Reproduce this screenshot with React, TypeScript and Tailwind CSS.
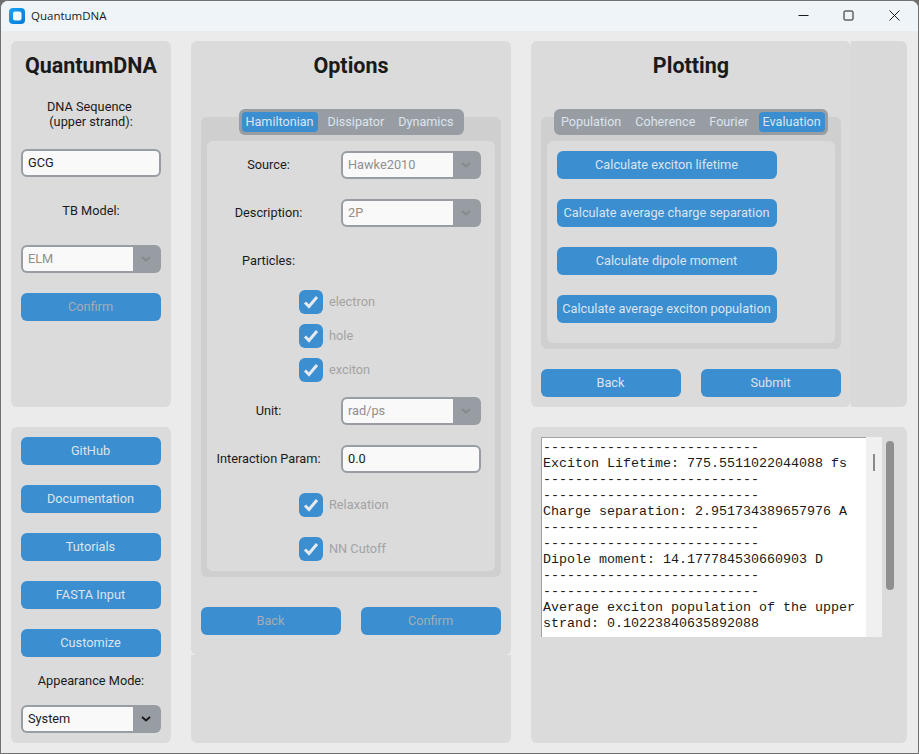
import React from "react";

const Chevron = ({ dark }: { dark?: boolean }) => (
  <svg width="10" height="6" viewBox="0 0 10 6" fill="none">
    <path d="M1 1 L5 4.5 L9 1" stroke={dark ? "#1a1a1a" : "#858a8e"} strokeWidth="2" />
  </svg>
);

const Btn = ({ children, disabled, w = "w-[140px]" }: { children: React.ReactNode; disabled?: boolean; w?: string }) => (
  <div className={`${w} h-[28px] shrink-0 rounded-[6px] bg-[#3b8ed0] flex items-center justify-center pr-[1px] text-[12.75px] ${disabled ? "text-[#a6adb3]" : "text-[#dce4ee]"}`}>
    {children}
  </div>
);

const Combo = ({ value, dark }: { value: string; dark?: boolean }) => (
  <div className="w-[140px] h-[28px] shrink-0 rounded-[6px] bg-[#979da2] p-[2px] flex">
    <div className={`w-[110px] bg-[#f9f9fa] rounded-l-[4px] pl-[5px] flex items-center text-[12.75px] ${dark ? "text-[#1a1a1a]" : "text-[#8f8f8f]"}`}>
      {value}
    </div>
    <div className="flex-1 flex items-center justify-center">
      <Chevron dark={dark} />
    </div>
  </div>
);

const Entry = ({ value }: { value: string }) => (
  <div className="w-[140px] h-[28px] shrink-0 rounded-[6px] border-2 border-[#979da2] bg-[#f9f9fa] pl-[5px] flex items-center text-[12.75px] text-[#1a1a1a]">
    {value}
  </div>
);

const Check = ({ label }: { label: string }) => (
  <div className="flex items-center h-[24px] ml-[92px]">
    <div className="w-[24px] h-[24px] rounded-[6px] bg-[#3b8ed0] flex items-center justify-center">
      <svg width="16" height="14" viewBox="0 0 16 14" fill="none">
        <path d="M2 7.5 L6 11.5 L14 2" stroke="#e4eaf0" strokeWidth="3" />
      </svg>
    </div>
    <span className="ml-[6px] text-[12.75px] text-[#a3a3a3]">{label}</span>
  </div>
);

const FormRow = ({ label, children }: { label: string; children?: React.ReactNode }) => (
  <div className="flex items-center h-[28px]">
    <div className="w-[123px] text-center text-[12.75px] text-[#1a1a1a] whitespace-nowrap">{label}</div>
    <div className="ml-[11px]">{children}</div>
  </div>
);

const Tabs = ({ items, active, w }: { items: string[]; active: string; w: string }) => (
  <div className={`relative z-10 mx-auto -mb-[18px] h-[26px] ${w} rounded-[6px] bg-[#979da2] p-[3px] flex`}>
    {items.map((t) => (
      <div
        key={t}
        className={`h-[20px] px-[4px] mr-[6px] last:mr-0 rounded-[4px] flex items-center text-[12.6px] whitespace-nowrap ${t === active ? "bg-[#3b8ed0] text-[#dce4ee]" : "text-[#dce4ee]"}`}
      >
        {t}
      </div>
    ))}
  </div>
);

const Title = ({ children }: { children: React.ReactNode }) => (
  <div className="h-[48px] text-center text-[21.5px] leading-[50px] font-bold text-[#1a1a1a] whitespace-nowrap">{children}</div>
);

const log = `---------------------------
Exciton Lifetime: 775.5511022044088 fs
---------------------------
---------------------------
Charge separation: 2.951734389657976 A
---------------------------
---------------------------
Dipole moment: 14.177784530660903 D
---------------------------
---------------------------
Average exciton population of the upper
strand: 0.10223840635892088`;

export default function App() {
  return (
    <div className="w-[919px] h-[754px] bg-[#6f6f6f] overflow-hidden" style={{ fontFamily: "Roboto, sans-serif" }}>
      <div className="w-[919px] h-[754px] rounded-t-[8px] border border-[#707070] bg-[#ebebeb] overflow-hidden flex flex-col">
        <div className="h-[30px] shrink-0 bg-[#eff4f9] flex items-center">
          <svg className="ml-[8px]" width="16" height="16" viewBox="0 0 16 16">
            <defs>
              <linearGradient id="logoFill" x1="0" y1="0" x2="1" y2="1">
                <stop offset="0" stopColor="#16a5f5" />
                <stop offset="1" stopColor="#0678d8" />
              </linearGradient>
            </defs>
            <rect width="16" height="16" rx="4" fill="url(#logoFill)" />
            <rect x="4" y="3.5" width="8.5" height="9" rx="2" fill="#f3f8fc" />
          </svg>
          <span className="ml-[6px] text-[11.5px] text-[#1a1a1a]" style={{ fontFamily: "'Open Sans', sans-serif" }}>QuantumDNA</span>
          <div className="ml-auto flex items-center mr-[18px] mb-[1px]">
            <svg width="11" height="11" viewBox="0 0 11 11" className="mr-[34px]"><path d="M0.5 5.5 H10.5" stroke="#1a1a1a" strokeWidth="1" /></svg>
            <svg width="11" height="11" viewBox="0 0 11 11" className="mr-[35px]"><rect x="1" y="1" width="9" height="9" rx="1" fill="none" stroke="#1a1a1a" strokeWidth="1" /></svg>
            <svg width="11" height="11" viewBox="0 0 11 11"><path d="M0.5 0.5 L10.5 10.5 M10.5 0.5 L0.5 10.5" stroke="#1a1a1a" strokeWidth="1" /></svg>
          </div>
        </div>

        <div className="flex gap-[20px] pl-[10px] pt-[10px]">
          {/* left column */}
          <div className="w-[160px] flex flex-col gap-[20px]">
            <div className="h-[366px] rounded-[6px] bg-[#dbdbdb] px-[10px] flex flex-col items-center">
              <Title>QuantumDNA</Title>
              <div className="mt-[10px] text-center text-[12.75px] leading-[15px] text-[#1a1a1a] whitespace-pre">{"DNA Sequence \n(upper strand):"}</div>
              <div className="mt-[20px]"><Entry value="GCG" /></div>
              <div className="mt-[26px] h-[16px] text-[12.75px] leading-[16px] text-[#1a1a1a]">TB Model:</div>
              <div className="mt-[26px]"><Combo value="ELM" /></div>
              <div className="mt-[20px]"><Btn disabled>Confirm</Btn></div>
            </div>
            <div className="h-[316px] rounded-[6px] bg-[#dbdbdb] px-[10px] pt-[10px] flex flex-col items-center gap-[20px]">
              <Btn>GitHub</Btn>
              <Btn>Documentation</Btn>
              <Btn>Tutorials</Btn>
              <Btn>FASTA Input</Btn>
              <Btn>Customize</Btn>
              <div className="-mt-[4px] h-[16px] text-[12.75px] leading-[16px] text-[#1a1a1a]">Appearance Mode:</div>
              <div className="-mt-[4px]"><Combo value="System" dark /></div>
            </div>
          </div>

          {/* middle column */}
          <div className="w-[320px] h-[702px] flex flex-col">
            <div className="h-[614px] rounded-[6px] bg-[#dbdbdb] px-[10px] flex flex-col">
              <Title>Options</Title>
              <div className="h-[20px]" />
              <Tabs items={["Hamiltonian", "Dissipator", "Dynamics"]} active="Hamiltonian" w="w-[225px]" />
              <div className="h-[460px] rounded-[6px] bg-[#cfcfcf] pt-[24px] px-[6px] pb-[6px] flex">
                <div className="flex-1 rounded-[6px] bg-[#dbdbdb] pt-[10px] flex flex-col">
                  <FormRow label="Source:"><Combo value="Hawke2010" /></FormRow>
                  <div className="h-[20px]" />
                  <FormRow label="Description:"><Combo value="2P" /></FormRow>
                  <div className="h-[20px]" />
                  <FormRow label="Particles:" />
                  <div className="h-[15px]" />
                  <Check label="electron" />
                  <div className="h-[10px]" />
                  <Check label="hole" />
                  <div className="h-[10px]" />
                  <Check label="exciton" />
                  <div className="h-[15px]" />
                  <FormRow label="Unit:"><Combo value="rad/ps" /></FormRow>
                  <div className="h-[20px]" />
                  <FormRow label="Interaction Param:"><Entry value="0.0" /></FormRow>
                  <div className="h-[20px]" />
                  <Check label="Relaxation" />
                  <div className="h-[20px]" />
                  <Check label="NN Cutoff" />
                </div>
              </div>
              <div className="mt-[30px] flex justify-between">
                <Btn disabled>Back</Btn>
                <Btn disabled>Confirm</Btn>
              </div>
            </div>
            <div className="flex-1 rounded-b-[6px] bg-[#dbdbdb]" />
          </div>

          {/* right column */}
          <div className="w-[376px] flex flex-col gap-[20px]">
            <div className="h-[366px] flex">
              <div className="w-[320px] rounded-[6px] bg-[#dbdbdb] px-[10px] flex flex-col">
                <Title>Plotting</Title>
                <div className="h-[20px]" />
                <Tabs items={["Population", "Coherence", "Fourier", "Evaluation"]} active="Evaluation" w="w-[274px]" />
                <div className="h-[232px] rounded-[6px] bg-[#cfcfcf] pt-[24px] px-[6px] pb-[6px] flex">
                  <div className="flex-1 rounded-[6px] bg-[#dbdbdb] pt-[10px] px-[10px] flex flex-col gap-[20px]">
                    <Btn w="w-[220px]">Calculate exciton lifetime</Btn>
                    <Btn w="w-[220px]">Calculate average charge separation</Btn>
                    <Btn w="w-[220px]">Calculate dipole moment</Btn>
                    <Btn w="w-[220px]">Calculate average exciton population</Btn>
                  </div>
                </div>
                <div className="mt-[20px] flex justify-between">
                  <Btn>Back</Btn>
                  <Btn>Submit</Btn>
                </div>
              </div>
              <div className="flex-1 rounded-r-[6px] bg-[#d9d9d9]" />
            </div>
            <div className="h-[316px] rounded-[6px] bg-[#dbdbdb] pt-[10px] pl-[10px] flex">
              <div className="w-[341px] h-[200px] flex bg-[#f0f0f0]">
                <div className="w-[325px] h-[200px] bg-white border-t border-l border-[#a0a0a0] overflow-hidden pl-[1px] pt-[2px]">
                  <pre className="text-[13.33px] leading-[16px] text-[#1a1a1a]" style={{ fontFamily: "'Liberation Mono', monospace" }}>{log}</pre>
                </div>
                <div className="flex-1 pt-[17px] flex justify-center">
                  <div className="w-[2px] h-[17px] bg-[#8a8a8a]" />
                </div>
              </div>
              <div className="ml-[4px] mt-[4px] w-[8px] h-[149px] rounded-[4px] bg-[#8f8f8f]" />
            </div>
          </div>
        </div>
      </div>
    </div>
  );
}
